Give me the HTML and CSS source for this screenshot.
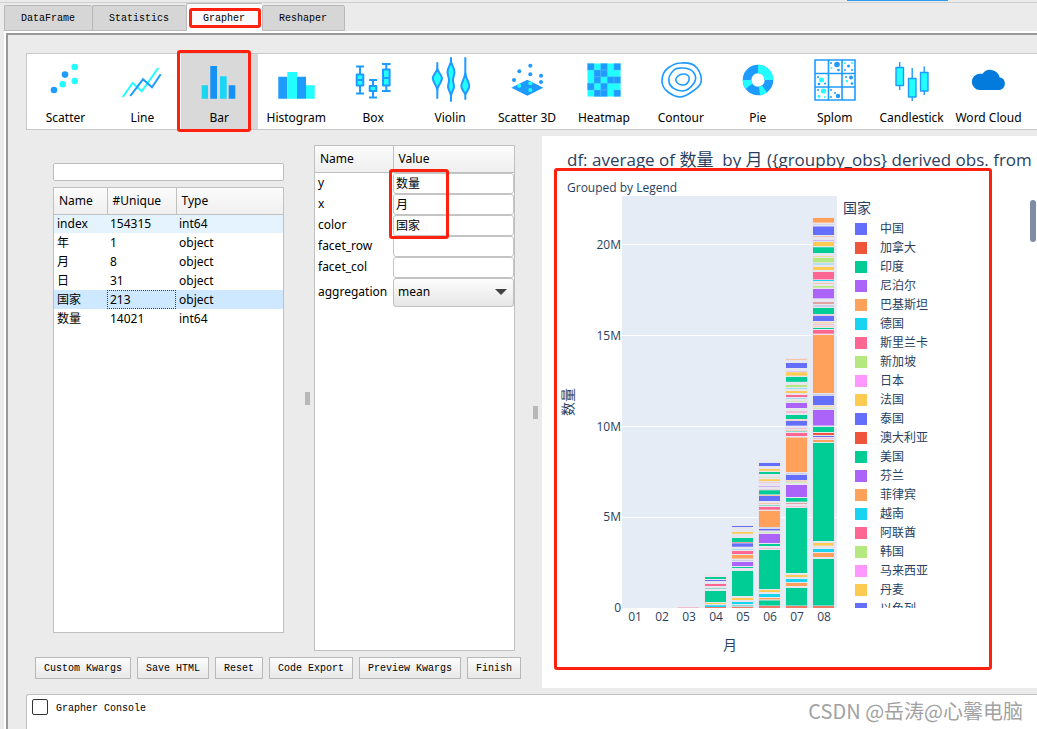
FILE: index.html
```html
<!DOCTYPE html>
<html lang="en">
<head>
<meta charset="utf-8">
<title>Grapher</title>
<link rel="stylesheet" href="styles.css">
</head>
<body>
<div class="topline"></div>
<nav class="tabs">
  <button class="tab">DataFrame</button>
  <button class="tab">Statistics</button>
  <button class="tab active">Grapher<span class="mark mark-tab"></span></button>
  <button class="tab">Reshaper</button>
</nav>
<main class="panel">
  <div class="toolbar">
    <button class="tool"><svg viewBox="0 0 48 48"><g class="b"><circle cx="13" cy="34" r="3.3"/><circle cx="24" cy="18.6" r="3.3"/></g><g class="c"><circle cx="21.7" cy="28.3" r="3.3"/><circle cx="33.7" cy="11" r="3.3"/><circle cx="33.7" cy="25" r="3.3"/></g></svg>Scatter</button>
    <button class="tool"><svg viewBox="0 0 48 48"><path class="lc" d="M4.7 41 14.7 27l9 8.3L40.3 12"/><path class="lb" d="M12.3 40 25 23.3l9 8 8.7-13"/></svg>Line</button>
    <button class="tool selected"><svg viewBox="0 0 48 48"><path fill="#1cd5f3" d="M6.7 29.3H13v13.4H6.7zM25 20.3h6.7v22.4H25z"/><path fill="#1592f4" d="M15.3 10H22v32.7h-6.7zM33.7 29.3h6.6v13.4h-6.6z"/></svg>Bar<span class="mark mark-tool"></span></button>
    <button class="tool"><svg viewBox="0 0 48 48"><path class="b" d="M6.3 20.7h9v22h-9zM25 20.7h9v22h-9z"/><path class="c" d="M15.3 16H25v26.7h-9.7zM34 29.3h8.7v13.4H34z"/></svg>Histogram</button>
    <button class="tool"><svg viewBox="0 0 48 48"><path class="o" d="M7.7 18.5h6.6v11H7.7zM7.7 24h6.6M11 18.5v-8M7 10.5h8M11 29.5v8M7 37.5h8M20.7 30h6.6v5h-6.6zM24 30v-6M20 24h8M24 35v6.5M20 41.5h8M34 13.5h6.6v16H34zM34 22h6.6M37.3 13.5V8M33 8h8.6M37.3 29.5V35M33 35h8.6"/></svg>Box</button>
    <button class="tool"><svg viewBox="0 0 48 48"><path class="o" d="M11.3 7v5c0 4-4.6 7-4.6 10.3S11 30 11.3 34v8c0-8 0-8 .4-10 .8-3 4.3-6.700 4.300-9.700S11.600 16 11.300 12zM25 2v3c-.5 4-3.500 7-3.500 11s2 6 1.500 9-1 4-1 6 2.500 5 3 9v5-5c.5-4 3-7 3-9s-.5-3-1-6 1.500-5 1.500-9-3-7-3.500-11zM39.300 2v14c0 6-4 10-4 14s3.500 6 4 9v4-4c.5-3 4-5 4-9s-4-8-4-14z"/></svg>Violin</button>
    <button class="tool"><svg viewBox="0 0 48 48"><path class="b" d="m8.300 31.700 16-8 16 8-16 8z"/><g class="b"><circle cx="27.300" cy="9.700" r="2"/><circle cx="16.300" cy="15.300" r="2"/><circle cx="27.300" cy="18.300" r="2"/><circle cx="38" cy="19.700" r="2"/><circle cx="11" cy="24" r="2"/><circle cx="38" cy="26" r="2"/></g><g class="c"><circle cx="27.300" cy="27.300" r="2"/><circle cx="16.300" cy="29.700" r="2"/><circle cx="27.300" cy="34" r="2"/></g></svg>Scatter 3D</button>
    <button class="tool"><svg viewBox="0 0 48 48"><path class="c" d="M7.500 7.500h33v33h-33z"/><path class="b" stroke="#5fb8ff" stroke-width=".4" d="M7.500 7.500h6.600v6.600H7.500zM20.700 7.500h6.600v6.600h-6.600zM33.900 7.500h6.600v6.600h-6.600zM14.100 14.100h6.600v6.600h-6.600zM20.700 14.100h6.600v6.600h-6.600zM14.100 20.700h6.600v6.600h-6.600zM27.300 20.700h6.600v6.600h-6.600zM33.900 20.700h6.600v6.600h-6.600zM7.500 27.300h6.600v6.600H7.500zM20.700 27.300h6.600v6.600h-6.600zM33.900 33.900h6.600v6.600h-6.600zM14.100 33.900h6.600v6.600h-6.600zM20.700 33.900h6.600v6.600h-6.600z"/></svg>Heatmap</button>
    <button class="tool"><svg viewBox="0 0 48 48"><g class="n"><path d="M24 7c7-.5 13 1 16 5s5 9 4 14-4 6-8 9-8 6-13 6-8-2-12-5-6-6-6-11 2-10 6-13 8-5 13-5z"/><path d="M25 12c6 0 10 2 12 5s2 7 0 10-6 8-12 8-12-4-13-9 1-8 4-11 5-3 9-3z"/><path d="M27 18c4 0 6 3 5 6s-3 5-6 5-6-2-7-4 0-3 2-5 3-2 6-2z"/></g></svg>Contour</button>
    <button class="tool"><svg viewBox="0 0 48 48"><g fill="none" stroke-width="8.600"><circle cx="24" cy="24" r="11" stroke="#1e9bff"/><path stroke="#22feff" d="M24 13a11 11 0 0 1 11 11M30.500 33a11 11 0 0 1-5 2M15 30.300a11 11 0 0 1-2-6.300"/></g></svg>Pie</button>
    <button class="tool"><svg viewBox="0 0 48 48"><path class="n" d="M4 4h40v40H4zM17.500 4v40M31 4v40M4 17.500h40M4 31h40"/><g class="b"><circle cx="26" cy="8.500" r="2.800"/><circle cx="20" cy="7" r="1"/><circle cx="27.500" cy="14" r="1.300"/><circle cx="37.500" cy="10" r="1.500"/><circle cx="34" cy="14" r="1"/><circle cx="41" cy="14" r="1"/><circle cx="40" cy="21.500" r="2"/><circle cx="35" cy="21" r="1"/><circle cx="41" cy="27.500" r="1.300"/><circle cx="7" cy="21" r="1"/><circle cx="8" cy="28" r="1.300"/><circle cx="14" cy="27.500" r="1"/><circle cx="27" cy="40" r="2.200"/><circle cx="20" cy="34" r="1"/><circle cx="24" cy="37" r="1"/><circle cx="20" cy="41" r="1"/><circle cx="7" cy="34" r="1"/></g><g class="c"><circle cx="20.500" cy="12" r="1"/><circle cx="34" cy="7" r="1"/><circle cx="41" cy="7" r="1"/><circle cx="10.500" cy="24" r="2.500"/><circle cx="36" cy="25" r="1.200"/><circle cx="12.500" cy="35" r="2.600"/><circle cx="8" cy="40.500" r="1.400"/><circle cx="14" cy="41" r="1"/></g></svg>Splom</button>
    <button class="tool"><svg viewBox="0 0 48 48"><path class="o thin" d="M8 11.500h7.500v18H8zM11.700 11.500V6M11.700 29.500V34M20.500 22.500H28v18.500h-7.500zM24.200 22.500V12M24.200 41v4M32.500 16.500H40V35h-7.500zM36.200 16.500V10.500M36.200 35v4"/></svg>Candlestick</button>
    <button class="tool"><svg viewBox="0 0 48 48"><path fill="#037bdc" d="M15 34a7.800 8 0 0 1-.5-16.200c1.500-.2 2 0 2.800.2a9.500 9.500 0 0 1 17.200 3.200A6.500 6.500 0 0 1 34.500 34z"/></svg>Word Cloud</button>
  </div>

  <div class="workspace">
    <section class="controls">
      <div class="columns">
        <div class="fields">
          <input class="search" type="text" aria-label="Filter columns">
          <div class="frame grow">
            <table class="grid">
              <thead><tr><th class="w-name">Name</th><th class="w-unique">#Unique</th><th>Type</th></tr></thead>
              <tbody>
                <tr class="hover"><td>index</td><td>154315</td><td>int64</td></tr>
                <tr><td>年</td><td>1</td><td>object</td></tr>
                <tr><td>月</td><td>8</td><td>object</td></tr>
                <tr><td>日</td><td>31</td><td>object</td></tr>
                <tr class="picked"><td>国家</td><td class="focus">213</td><td>object</td></tr>
                <tr><td>数量</td><td>14021</td><td>int64</td></tr>
              </tbody>
            </table>
          </div>
        </div>
        <div class="splitter"></div>
        <div class="frame args">
          <table class="grid form">
            <thead><tr><th class="w-arg">Name</th><th>Value</th></tr></thead>
            <tbody>
              <tr><td><label for="a-y">y</label></td><td><input id="a-y" type="text" value="数量"></td></tr>
              <tr><td><label for="a-x">x</label></td><td><input id="a-x" type="text" value="月"></td></tr>
              <tr><td><label for="a-color">color</label></td><td><input id="a-color" type="text" value="国家"></td></tr>
              <tr><td><label for="a-row">facet_row</label></td><td><input id="a-row" type="text"></td></tr>
              <tr><td><label for="a-col">facet_col</label></td><td><input id="a-col" type="text"></td></tr>
              <tr><td><label for="a-agg">aggregation</label></td><td class="pick"><select id="a-agg"><option>mean</option></select></td></tr>
            </tbody>
          </table>
          <span class="mark mark-args"></span>
        </div>
        <div class="splitter low"></div>
      </div>
      <div class="actions">
        <button>Custom Kwargs</button>
        <button>Save HTML</button>
        <button>Reset</button>
        <button>Code Export</button>
        <button>Preview Kwargs</button>
        <button>Finish</button>
      </div>
    </section>

    <section class="plot">
      <h1 class="title">df: average of 数量&nbsp; by 月 ({groupby_obs} derived obs. from</h1>
      <p class="subtitle">Grouped by Legend</p>
      <div class="chart">
        <svg class="axes" viewBox="542 196 300 464" role="img" aria-label="Stacked bar chart">
          <rect x="622" y="196" width="215" height="412" fill="#e5ecf6"/>
          <path stroke="#fff" stroke-width="1" d="M622 244.500h215M622 335.500h215M622 426.500h215M622 517.500h215"/>
          <g id="bars"></g>
          <g class="tick end"><text x="621" y="249">20M</text><text x="621" y="340">15M</text><text x="621" y="431">10M</text><text x="621" y="521">5M</text><text x="621" y="612">0</text></g>
          <g class="tick mid"><text x="635" y="621">01</text><text x="662" y="621">02</text><text x="689" y="621">03</text><text x="716" y="621">04</text><text x="743" y="621">05</text><text x="770" y="621">06</text><text x="797" y="621">07</text><text x="824" y="621">08</text></g>
          <text class="axis" x="730" y="650">月</text>
          <text class="axis" transform="translate(573 402) rotate(-90)">数量</text>
        </svg>
        <div class="legend">
          <h2>国家</h2>
          <ul>
            <li class="k0">中国</li><li class="k1">加拿大</li><li class="k2">印度</li><li class="k3">尼泊尔</li><li class="k4">巴基斯坦</li>
            <li class="k5">德国</li><li class="k6">斯里兰卡</li><li class="k7">新加坡</li><li class="k8">日本</li><li class="k9">法国</li>
            <li class="k0">泰国</li><li class="k1">澳大利亚</li><li class="k2">美国</li><li class="k3">芬兰</li><li class="k4">菲律宾</li>
            <li class="k5">越南</li><li class="k6">阿联酋</li><li class="k7">韩国</li><li class="k8">马来西亚</li><li class="k9">丹麦</li>
            <li class="k0">以色列</li>
          </ul>
        </div>
      </div>
      <span class="thumb"></span>
      <span class="mark mark-plot"></span>
    </section>
  </div>

  <footer class="console">
    <input type="checkbox" id="console"><label for="console">Grapher Console</label>
    <span class="watermark">CSDN @岳涛@心馨电脑</span>
  </footer>
</main>
<script src="chart.js"></script>
</body>
</html>
```
FILE: chart.js
```js
// Segment colours; capitals are solid, lower case are faint hairline segments.
const colors = {
  B: '#636efa', R: '#ef553b', G: '#00cc96', P: '#ab63fa', O: '#ffa15a', C: '#19d3f3',
  K: '#ff6692', L: '#b6e880', Y: '#fecb52',
  b: '#c9cfe8', r: '#e3a0a5', g: '#8fd8cd', p: '#cfb5f3', o: '#f5c5a5', c: '#9edff0',
  k: '#f1bfd0', l: '#cfe8b4', y: '#f3dca0', s: '#f27a68'
};

// Each segment: colour key, top, bottom.
const stacks = [
  { x: 678, top: 607, parts: 'k 607 608' },
  { x: 705, top: 574, parts: 'G 577 579,B 580 581,K 584 586,g 588 589,G 591 602,Y 603 604,C 605.3 607,s 607 608' },
  { x: 732, top: 525, parts: 'B 526 527,Y 532 533.7,G 538 542,r 542 543,B 543.4 546.7,c 549 550,K 551 554,O 555 558.5,b 560 561,P 562 566,G 567 568,G 571 596,Y 598 600,C 602 604,g 605 606.5,s 607 608' },
  { x: 759, top: 461, parts: 'B 463 466,Y 469 470.7,G 472 474,l 477 477.6,Y 479.3 481,k 482 482.7,p 486 487,k 489 489.5,G 490.3 494.4,o 495 496,B 496 501,o 503 504,g 505 506,K 507 509.7,O 511 527,b 527.5 528.5,B 529 530.4,l 532 533,P 534 543,G 544 546,k 548 549,G 550 589,Y 590 592,C 594 597,O 598 599.4,G 600.5 605.5,s 606 608' },
  { x: 786, top: 358, parts: 'o 359 360,B 363 368,p 371 371.5,Y 372.3 375.6,G 377 381.8,L 385 387,c 388 389,Y 391 393,K 395 397,c 398 399,l 401 402,P 403 408,k 411 413,G 415 419,o 419.6 420.5,B 421 425.6,k 428 429,o 430 430.7,g 431 432,K 433 436,O 437.6 472,b 473 474.5,B 475 480,o 480.5 481.5,l 482 483,P 485 497,G 498 501.7,r 503 504,k 506 507,G 508 573,Y 575 577,C 579 582,O 583 586,G 588 605.5,s 606 608' },
  { x: 813, top: 217, parts: 'O 218 222.6,b 224 224.6,B 226.5 235,o 236 237,p 240 241,Y 242 246,G 247.3 253,y 256 257,L 258 262.3,c 263.3 264.7,Y 267 270,K 272 279.3,C 280 281,o 283 284,L 286 287.6,P 289 298.3,r 302 304,b 305 307,G 308 314,k 314.6 315.6,B 316 321,y 322 323.3,k 324 325,o 326 326.7,G 328 329,K 330 333.7,O 335 393,b 394 395.7,B 396 405,y 405.7 407,l 408 409,P 410 425.5,G 427 432,R 433 435,B 436 437,k 438 439,O 440 442,G 443 541,Y 543 545.6,C 549 552,O 553 557,G 559 605.5,s 606 608' }
];

const ns = 'http://www.w3.org/2000/svg';
const layer = document.getElementById('bars');

function addRect(x, top, bottom, width, fill) {
  const rect = document.createElementNS(ns, 'rect');
  rect.setAttribute('x', x);
  rect.setAttribute('y', top);
  rect.setAttribute('width', width);
  rect.setAttribute('height', bottom - top);
  rect.setAttribute('fill', fill);
  layer.appendChild(rect);
}

for (const stack of stacks) {
  addRect(stack.x - 1, stack.top, 608, 23, '#e7e6ef');
  for (const part of stack.parts.split(',')) {
    const [key, top, bottom] = part.split(' ');
    addRect(stack.x, Number(top), Number(bottom), 21, colors[key]);
  }
}
```
FILE: styles.css
```css
* { box-sizing: border-box; }

body {
  margin: 0;
  height: 100vh;
  display: flex;
  flex-direction: column;
  overflow: hidden;
  background: #ebebeb;
  color: #000;
  font: 12px/16px "Noto Sans", "Noto Sans CJK SC", sans-serif;
}

button, input, select { font: inherit; color: inherit; margin: 0; }

.topline {
  height: 3px;
  flex: none;
  border-bottom: 1px solid #d0d0d0;
  background: linear-gradient(#2f9bf0, #2f9bf0) right 89px top / 101px 1px no-repeat;
}

/* Tabs */
.tabs {
  display: flex;
  align-items: flex-end;
  height: 28px;
  flex: none;
  padding-left: 4px;
}
.tab {
  position: relative;
  height: 26px;
  padding: 2px 17px 0 16px;
  border: 1px solid #b9b9b9;
  border-right-width: 0;
  border-radius: 2px 2px 0 0;
  background: #d6d6d6;
  font: 10px/16px "Liberation Mono", monospace;
}
.tab:last-child { border-right-width: 1px; }
.tab.active {
  height: 28px;
  padding-top: 4px;
  background: #fafafa;
  border-bottom-color: #fafafa;
}

/* Red highlight frames */
.mark {
  position: absolute;
  border: 3px solid #ff2010;
  border-radius: 3px;
  pointer-events: none;
}
.mark-tab { inset: 4px 1px 2px 2px; }
.mark-tool { inset: -4px 7px -3px -4px; }
.mark-args { left: 74px; top: 23px; width: 60px; height: 70px; }
.mark-plot { left: 12px; top: 32px; width: 438px; height: 502px; }

.panel {
  flex: 1;
  min-height: 0;
  display: flex;
  flex-direction: column;
  margin: 0 0 0 4px;
  border-left: 2px solid #fff;
  border-top: 2px solid #fff;
  padding: 20px 0 0 18px;
  box-shadow: inset 2px 2px 0 #999;
}

/* Toolbar */
.toolbar {
  display: flex;
  flex: none;
  margin-left: 2px;
  padding-right: 10px;
  border: 1px solid #c8c8c8;
  border-right: 0;
  background: #fff;
}
.tool {
  position: relative;
  flex: 1 1 0;
  min-width: 0;
  display: flex;
  flex-direction: column;
  align-items: center;
  padding: 2px 0 3px;
  border: 0;
  background: none;
  white-space: nowrap;
}
.tool svg { width: 48px; height: 48px; margin-bottom: 6px; }
.tool.selected { background: #d9d9d9; }
.b { fill: #1e9bff; }
.c { fill: #22feff; }
.lb, .lc, .n { fill: none; stroke: #1e9bff; stroke-width: 2; }
.lc { stroke: #22feff; }
.n { stroke-width: 1.6; }
.o { fill: #22feff; stroke: #1e9bff; stroke-width: 2; stroke-linejoin: round; }
.o.thin { stroke-width: 1.4; }

/* Workspace */
.workspace {
  flex: 1;
  min-height: 0;
  display: flex;
  padding: 6px 0;
}
.controls {
  flex: none;
  display: flex;
  flex-direction: column;
  width: 518px;
  padding: 9px 0 9px 11px;
}
.columns { flex: 1; min-height: 0; display: flex; padding-left: 18px; }
.fields {
  width: 231px;
  display: flex;
  flex-direction: column;
  gap: 6px;
  padding: 18px 0;
}
.search {
  height: 18px;
  width: 100%;
  border: 1px solid #bdbdbd;
  border-radius: 2px;
  background: #fff;
}
.frame { position: relative; border: 1px solid #c0c0c0; background: #fff; }
.grow { flex: 1; }
.args { width: 201px; }
.splitter { width: 30px; display: flex; align-items: center; justify-content: center; padding-left: 16px; }
.splitter::before { content: ""; width: 3px; height: 11px; background: #b8b8b8; border: 1px solid #b8b8b8; }
.splitter.low { width: 27px; padding: 28px 0 0 14px; }

.grid { width: 100%; border-collapse: collapse; table-layout: fixed; }
.grid th {
  height: 26px;
  padding: 0 0 0 5px;
  text-align: left;
  font-weight: 400;
  border-bottom: 1px solid #c0c0c0;
  background: linear-gradient(#fcfcfc, #efefef);
}
.grid th + th { border-left: 1px solid #c0c0c0; }
.grid td { height: 19px; padding: 0 0 0 3px; line-height: 16px; }
.w-name { width: 53px; }
.w-unique { width: 69px; }
.w-arg { width: 78px; }
.hover { background: #e5f3ff; }
.picked { background: #cde8ff; }
.grid .focus { outline: 1px dotted #603818; outline-offset: -1px; }

.form td { height: 21px; }
.form td + td { padding: 0; }
.form input {
  display: block;
  width: 100%;
  height: 21px;
  padding: 0 2px;
  border: 1px solid #c4c4c4;
  border-radius: 3px;
  background: #fff;
}
.form select {
  display: block;
  width: 100%;
  height: 29px;
  padding: 0 4px;
  appearance: none;
  border: 1px solid #c0c0c0;
  border-radius: 3px;
  background: linear-gradient(#fdfdfd, #e6e6e6);
}
.pick { position: relative; }
.pick::after {
  content: "";
  position: absolute;
  right: 7px;
  top: 11px;
  border: 6px solid transparent;
  border-top-color: #404040;
  border-bottom: 0;
  pointer-events: none;
}

.actions { display: flex; gap: 6px; margin-top: 6px; }
.actions button {
  height: 22px;
  padding: 2px 8px 0;
  border: 1px solid #b8b8b8;
  border-radius: 0;
  background: linear-gradient(#fcfcfc, #e8e8e8);
  font: 10px/16px "Liberation Mono", monospace;
  white-space: nowrap;
}

/* Plot */
.plot {
  position: relative;
  flex: 1;
  min-width: 0;
  background: #fff;
  color: #2a3f5f;
  font-family: "Open Sans", "Noto Sans CJK SC", sans-serif;
}
.title {
  margin: 0;
  padding: 12px 0 0 25px;
  font-size: 17px;
  line-height: 24px;
  font-weight: 400;
  white-space: nowrap;
  overflow: hidden;
}
.subtitle { margin: 0; padding: 8px 0 0 25px; }
.chart { display: flex; align-items: flex-start; }
.axes { flex: none; width: 300px; height: 464px; display: block; }
.tick, .axis { fill: #2a3f5f; }
.end { text-anchor: end; }
.mid, .axis { text-anchor: middle; }
.axis { font-size: 14px; }
.legend { height: 412px; padding: 3px 0 0 1px; overflow: hidden; }
.legend h2 { margin: 0; padding-bottom: 2px; font-size: 14px; line-height: 18px; font-weight: 400; }
.legend ul { list-style: none; margin: 0; padding: 0 0 0 12px; }
.legend li {
  display: flex;
  align-items: center;
  gap: 13px;
  height: 19px;
}
.legend li::before { content: ""; width: 12px; height: 12px; background: var(--key); }
.k0 { --key: #636efa; }
.k1 { --key: #ef553b; }
.k2 { --key: #00cc96; }
.k3 { --key: #ab63fa; }
.k4 { --key: #ffa15a; }
.k5 { --key: #19d3f3; }
.k6 { --key: #ff6692; }
.k7 { --key: #b6e880; }
.k8 { --key: #ff97ff; }
.k9 { --key: #fecb52; }
.thumb {
  position: absolute;
  right: 1px;
  top: 64px;
  width: 6px;
  height: 42px;
  border-radius: 3px;
  background: #808ba4;
}

/* Console */
.console {
  flex: none;
  display: flex;
  align-items: flex-start;
  height: 35px;
  margin-left: 2px;
  padding: 4px 14px 0 5px;
  border: 1px solid #c0c0c0;
  border-width: 1px 0 0 1px;
  border-radius: 3px 0 0 0;
  background: #fff;
}
.console input {
  appearance: none;
  width: 16px;
  height: 16px;
  border: 1px solid #333;
  border-radius: 2px;
  background: #fff;
}
.console label {
  margin-left: 8px;
  font: 10px/20px "Liberation Mono", monospace;
}
.watermark {
  margin-left: auto;
  font-family: "Noto Sans CJK SC", sans-serif;
  font-size: 20px;
  line-height: 24px;
  color: #a2a2a2;
}
```
